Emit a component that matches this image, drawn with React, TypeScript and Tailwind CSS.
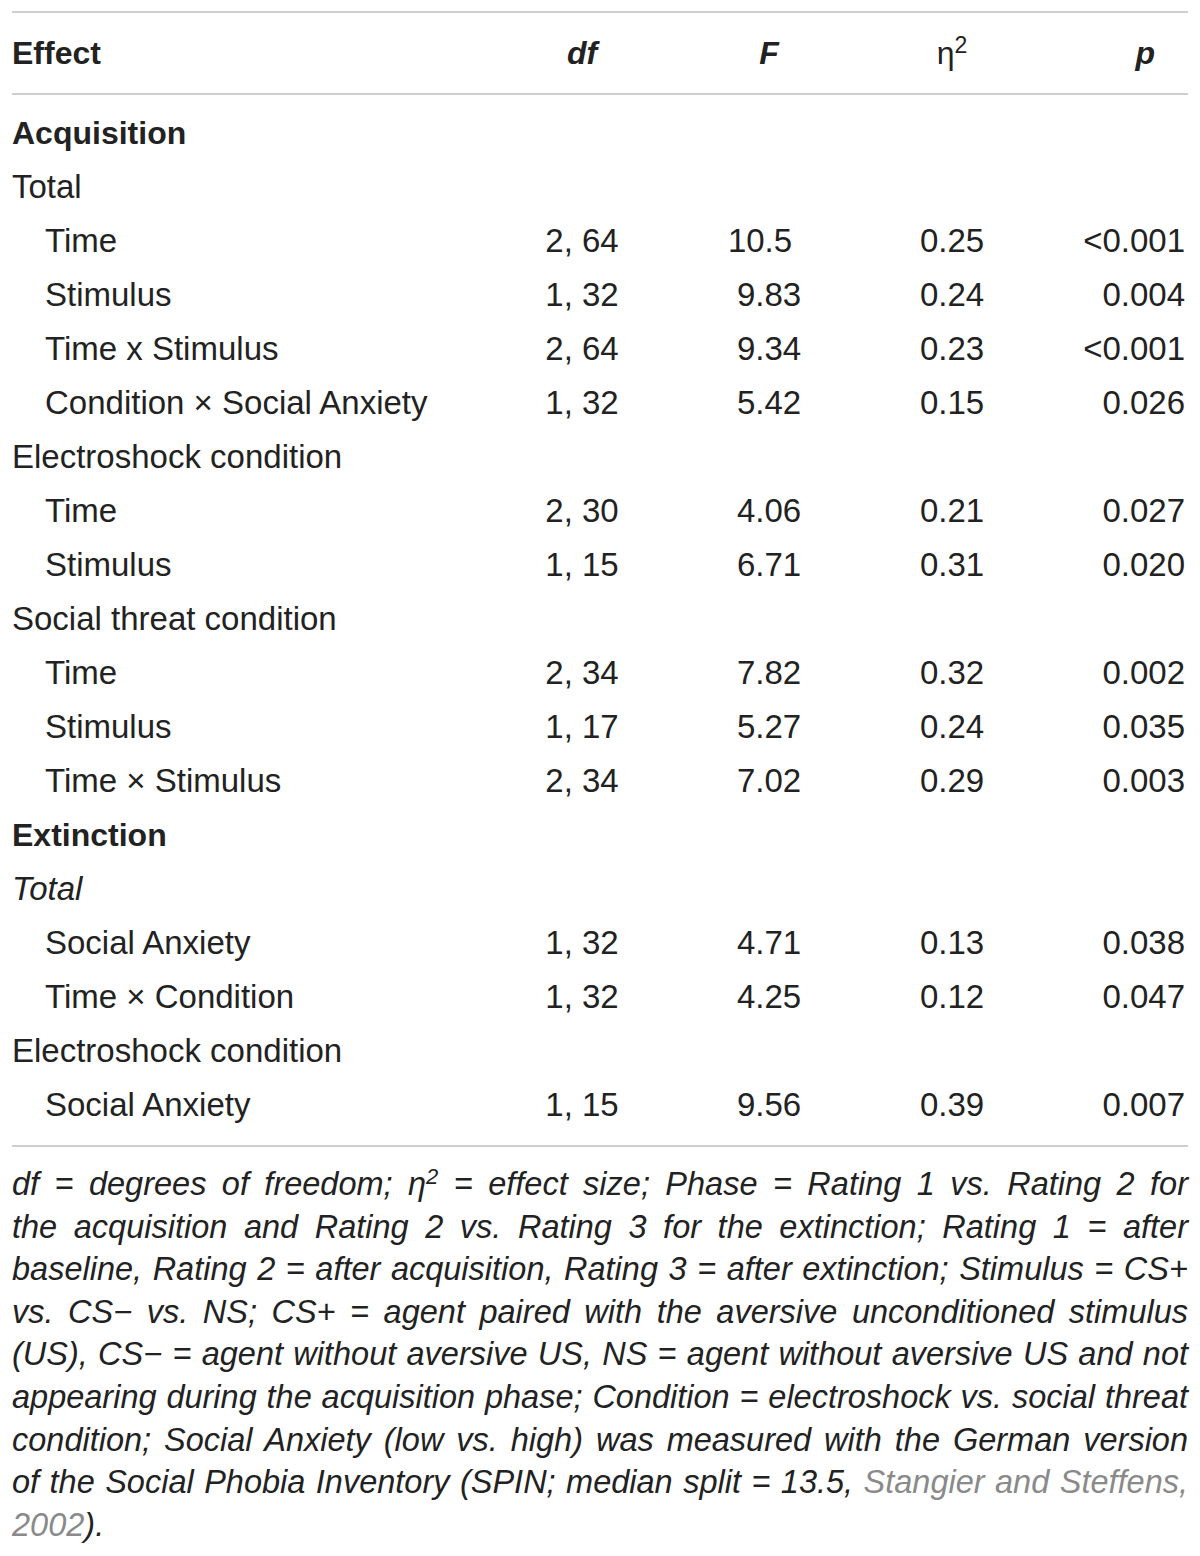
import React from 'react';

type Row = {
  label: string;
  kind: 'section' | 'group' | 'groupItalic' | 'item';
  df?: string;
  f?: string;
  fShift?: boolean;
  eta?: string;
  p?: string;
};

const rows: Row[] = [
  { label: 'Acquisition', kind: 'section' },
  { label: 'Total', kind: 'group' },
  { label: 'Time', kind: 'item', df: '2, 64', f: '10.5', fShift: true, eta: '0.25', p: '<0.001' },
  { label: 'Stimulus', kind: 'item', df: '1, 32', f: '9.83', eta: '0.24', p: '0.004' },
  { label: 'Time x Stimulus', kind: 'item', df: '2, 64', f: '9.34', eta: '0.23', p: '<0.001' },
  { label: 'Condition × Social Anxiety', kind: 'item', df: '1, 32', f: '5.42', eta: '0.15', p: '0.026' },
  { label: 'Electroshock condition', kind: 'group' },
  { label: 'Time', kind: 'item', df: '2, 30', f: '4.06', eta: '0.21', p: '0.027' },
  { label: 'Stimulus', kind: 'item', df: '1, 15', f: '6.71', eta: '0.31', p: '0.020' },
  { label: 'Social threat condition', kind: 'group' },
  { label: 'Time', kind: 'item', df: '2, 34', f: '7.82', eta: '0.32', p: '0.002' },
  { label: 'Stimulus', kind: 'item', df: '1, 17', f: '5.27', eta: '0.24', p: '0.035' },
  { label: 'Time × Stimulus', kind: 'item', df: '2, 34', f: '7.02', eta: '0.29', p: '0.003' },
  { label: 'Extinction', kind: 'section' },
  { label: 'Total', kind: 'groupItalic' },
  { label: 'Social Anxiety', kind: 'item', df: '1, 32', f: '4.71', eta: '0.13', p: '0.038' },
  { label: 'Time × Condition', kind: 'item', df: '1, 32', f: '4.25', eta: '0.12', p: '0.047' },
  { label: 'Electroshock condition', kind: 'group' },
  { label: 'Social Anxiety', kind: 'item', df: '1, 15', f: '9.56', eta: '0.39', p: '0.007' },
];

const cols = 'grid grid-cols-[480px_180px_194px_172px_149px]';

const Rule = () => <div className="h-[2px] bg-[#cfcfcf]" />;

const FootLine: React.FC<{ children: React.ReactNode }> = ({ children }) => (
  <div className="text-justify [text-align-last:justify]">{children}</div>
);

export default function App() {
  return (
    <div className="bg-white min-h-[1556px] px-[12px] pt-[11px] text-[#222] font-['Liberation_Sans',Arial,sans-serif]">
      <Rule />
      <div className={`${cols} h-[80px] items-center text-[32px] font-bold`}>
        <div>Effect</div>
        <div className="text-center italic">df</div>
        <div className="text-center italic">F</div>
        <div className="text-center font-normal">
          η<sup className="text-[23px] font-normal">2</sup>
        </div>
        <div className="text-right italic pr-[32px]">p</div>
      </div>
      <Rule />
      <div className="pt-[11px] pb-[13px]">
        {rows.map((r, i) => (
          <div key={i} className={`${cols} h-[54px] items-center text-[33px]`}>
            <div
              className={
                r.kind === 'section'
                  ? 'font-bold text-[32px]'
                  : r.kind === 'groupItalic'
                  ? 'italic'
                  : r.kind === 'item'
                  ? 'pl-[33px]'
                  : ''
              }
            >
              {r.label}
            </div>
            <div className="text-center">{r.df}</div>
            <div className={`text-center ${r.fShift ? 'pr-[18px]' : ''}`}>{r.f}</div>
            <div className="text-center">{r.eta}</div>
            <div className="text-right pr-[2px]">{r.p}</div>
          </div>
        ))}
      </div>
      <Rule />
      <div className="pt-[16px] text-[32.5px] leading-[42.6px] italic text-[#222]">
        <FootLine>
          df = degrees of freedom; η<sup className="text-[22px]">2</sup> = effect size; Phase = Rating 1 vs. Rating 2 for
        </FootLine>
        <FootLine>the acquisition and Rating 2 vs. Rating 3 for the extinction; Rating 1 = after</FootLine>
        <FootLine>baseline, Rating 2 = after acquisition, Rating 3 = after extinction; Stimulus = CS+</FootLine>
        <FootLine>vs. CS− vs. NS; CS+ = agent paired with the aversive unconditioned stimulus</FootLine>
        <FootLine>(US), CS− = agent without aversive US, NS = agent without aversive US and not</FootLine>
        <FootLine>appearing during the acquisition phase; Condition = electroshock vs. social threat</FootLine>
        <FootLine>condition; Social Anxiety (low vs. high) was measured with the German version</FootLine>
        <FootLine>
          of the Social Phobia Inventory (SPIN; median split = 13.5,{' '}
          <span className="text-[#8a8a8a]">Stangier and Steffens,</span>
        </FootLine>
        <div>
          <span className="text-[#8a8a8a]">2002</span>).
        </div>
      </div>
    </div>
  );
}
